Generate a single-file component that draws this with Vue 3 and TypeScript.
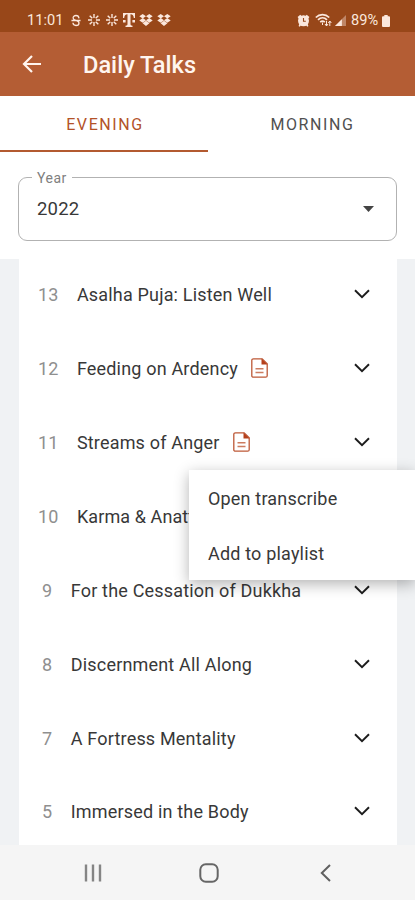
<script setup lang="ts">
interface Talk {
  day: number
  title: string
  transcript?: boolean
}

const talks: Talk[] = [
  { day: 13, title: 'Asalha Puja: Listen Well' },
  { day: 12, title: 'Feeding on Ardency', transcript: true },
  { day: 11, title: 'Streams of Anger', transcript: true },
  { day: 10, title: 'Karma & Anatta' },
  { day: 9, title: 'For the Cessation of Dukkha' },
  { day: 8, title: 'Discernment All Along' },
  { day: 7, title: 'A Fortress Mentality' },
  { day: 5, title: 'Immersed in the Body' },
]
</script>

<template>
  <div class="screen">
    <div class="status">
      <span class="clock">11:01</span>
      <svg class="s-badge" width="10" height="13" viewBox="0 0 11 14" fill="none" stroke="currentColor" stroke-width="1.4">
        <path d="M8.800 4.600C8.600 2.500 7.300 1.500 5.500 1.500 3.600 1.500 2.300 2.600 2.300 4.300 2.300 7.500 8.800 6.300 8.800 9.700 8.800 11.500 7.500 12.500 5.500 12.500 3.500 12.500 2.300 11.500 2.100 9.500M.5 7h10" />
      </svg>
      <svg v-for="n in 2" :key="'f' + n" class="flake" width="12" height="12" viewBox="0 0 12 12" fill="none" stroke="currentColor" stroke-width="1.400">
        <path d="M6 0v4M6 8v4M0 6h4M8 6h4M1.700 1.700l2.600 2.600M7.700 7.700l2.600 2.600M10.300 1.700 7.700 4.300M4.300 7.700l-2.600 2.600" />
      </svg>
      <svg class="carrier" width="12" height="14" viewBox="0 0 12 14" fill="currentColor">
        <path d="M0 0h12v5h-1.200C10.700 2.800 9.700 1.400 7.500 1.300V11c0 1.200.5 1.600 2 1.700V14h-7v-1.300c1.500-.1 2-.5 2-1.700V1.300C2.300 1.400 1.300 2.800 1.200 5H0zM0 7h2.600v2.600H0zM9.400 7H12v2.600H9.400z" />
      </svg>
      <svg v-for="n in 2" :key="'d' + n" class="box" width="14" height="12" viewBox="0 0 14 12" fill="currentColor">
        <path d="M3.700 0 7 2.200 3.700 4.400.3 2.200zM10.300 0l3.400 2.200-3.400 2.200L7 2.200zM3.700 4 7 6.200 3.700 8.700.3 6.600zM10.300 4l3.400 2.600-3.400 2.100L7 6.200zM7 6.800l3.400 2.500L7 12 3.600 9.300z" />
      </svg>
      <span class="grow"></span>
      <svg class="alarm" width="13" height="13" viewBox="0 0 13 13">
        <g fill="currentColor"><circle cx="6.500" cy="6.800" r="5.500" /><path d="M.6 3 3.300.8 5 2.500 2 5zM12.400 3 9.700.8 8 2.500 11 5zM2.500 9.500l1.700 1.500-1.500 1.700-1.100-.8zM10.500 9.500 8.800 11l1.500 1.700 1.100-.8z" /></g>
        <path d="M6.500 4v3.300h2.300" fill="none" stroke="#984719" stroke-width="1.100" />
      </svg>
      <svg class="wifi" width="17" height="14" viewBox="0 0 17 14" fill="none" stroke="currentColor" stroke-width="1.700">
        <path d="M.8 4.500C4.500.7 10.500.7 14.200 4.500M3 6.900c2.600-2.600 6.400-2.600 9 0M5.200 9.200c1.400-1.300 3.200-1.300 4.600 0" />
        <path d="M7.500 9.500v2.500M11.500 8v5M10 11l1.500 2 1.500-2M14.800 13V8M13.300 10l1.500-2 1.500 2" stroke-width="1" />
      </svg>
      <svg class="signal" width="11" height="11" viewBox="0 0 12 12" fill="currentColor">
        <path d="M12 0v12H0z" opacity=".4" /><path d="M7.500 4.500V12H0z" />
      </svg>
      <span class="percent">89%</span>
      <svg class="battery" width="8" height="12" viewBox="0 0 8 12" fill="currentColor">
        <path d="M2.300 0h3.400v1.300H7q1 0 1 1V11q0 1-1 1H1q-1 0-1-1V2.300q0-1 1-1h1.300z" />
      </svg>
    </div>

    <header class="appbar">
      <svg width="20" height="18" viewBox="0 0 20 18" fill="none" stroke="currentColor" stroke-width="2.200">
        <path d="M19 9H2.500M10 1 2 9l8 8" />
      </svg>
      <h1>Daily Talks</h1>
    </header>

    <nav class="tabs">
      <span class="tab active">EVENING</span>
      <span class="tab">MORNING</span>
    </nav>

    <div class="filter">
      <fieldset class="select">
        <legend>Year</legend>
        <span>2022</span>
        <svg width="11" height="6" viewBox="0 0 11 6" fill="#444"><path d="M0 0h11L5.500 6z" /></svg>
      </fieldset>
    </div>

    <main class="body">
      <div class="list">
        <div v-for="talk in talks" :key="talk.day" class="row">
          <span class="day" :class="{ single: talk.day < 10 }">{{ talk.day }}</span>
          <span class="title">{{ talk.title }}</span>
          <svg v-if="talk.transcript" class="doc" width="17" height="20" viewBox="0 0 17 20">
            <path d="M2.500.8h8.700l5 5v11.900q0 1.500-1.500 1.500H2.500Q.8 19.200.8 17.700V2.300Q.8.8 2.500.8z" fill="none" stroke="#bd5836" stroke-width="1.300" />
            <path d="M10.500.5v6h6z" fill="#b5401c" />
            <path d="M4.500 10.700h8M4.500 14.500h8" stroke="#cc7c60" stroke-width="1.500" />
          </svg>
          <svg class="chevron" width="16" height="10" viewBox="0 0 16 10" fill="none" stroke="#1c1c1c" stroke-width="1.900">
            <path d="m1 1.300 7 6.900 7-6.900" />
          </svg>
        </div>
      </div>
      <div class="menu">
        <div class="item">Open transcribe</div>
        <div class="item">Add to playlist</div>
      </div>
    </main>

    <footer class="sysnav">
      <svg width="18" height="18" viewBox="0 0 18 18" stroke="#858585" stroke-width="2.400"><path d="M2 .5v17M9 .5v17M16 .5v17" /></svg>
      <svg class="home" width="20" height="20" viewBox="0 0 20 20" fill="none" stroke="#666" stroke-width="2"><rect x="1.300" y="1.300" width="17.400" height="17.400" rx="5.500" /></svg>
      <svg width="11" height="18" viewBox="0 0 11 18" fill="none" stroke="#606060" stroke-width="2"><path d="M10 1 1.800 9l8.200 8" /></svg>
    </footer>
  </div>
</template>

<style>
body {
  margin: 0;
}
</style>

<style scoped>
.screen {
  width: 415px;
  height: 900px;
  display: flex;
  flex-direction: column;
  overflow: hidden;
  background: #fff;
  color: #383838;
  font-family: Roboto, "Liberation Sans", sans-serif;
}
svg {
  flex: none;
  display: block;
}
.status {
  flex: none;
  height: 32px;
  box-sizing: border-box;
  padding: 8px 25px 0 27px;
  display: flex;
  align-items: center;
  background: #984719;
  color: #fbe7dc;
}
.clock,
.percent {
  font-size: 14.600px;
  line-height: 22px;
}
.clock { width: 36px; }
.s-badge { margin-left: 8px; }
.flake { margin-left: 7px; }
.flake + .flake { margin-left: 6px; }
.carrier { margin-left: 5px; }
.box { margin-left: 4px; }
.grow { flex: 1; }
.wifi { margin-left: 5px; }
.signal { margin-left: 3px; }
.percent { margin-left: 5px; width: 29px; }
.battery { margin-left: 2px; margin-top: 1px; }
.appbar {
  flex: none;
  height: 64px;
  box-sizing: border-box;
  padding-left: 22px;
  display: flex;
  align-items: center;
  gap: 41px;
  background: #b45d34;
  color: #fff5ef;
}
h1 {
  margin: 0;
  padding-top: 2px;
  font-size: 23.600px;
  font-weight: 500;
  line-height: 30px;
}
.tabs {
  flex: none;
  height: 56px;
  display: grid;
  grid-template-columns: 208px 207px;
}
.tab {
  display: flex;
  align-items: center;
  justify-content: center;
  box-sizing: border-box;
  padding: 2px 0 0 2px;
  border-bottom: 2px solid transparent;
  font-size: 16px;
  letter-spacing: 1.600px;
  color: #505050;
}
.tab.active {
  color: #b35228;
  border-color: #b35a30;
}
.filter {
  flex: none;
  height: 107px;
  box-sizing: border-box;
  padding: 17px 18px 18px;
}
.select {
  height: 72px;
  box-sizing: border-box;
  margin: 0;
  padding: 0 22px 8px 18px;
  border: 1px solid #b2b2b2;
  border-radius: 9px;
  display: flex;
  align-items: center;
  justify-content: space-between;
  font-size: 18.500px;
  letter-spacing: 0.200px;
}
legend {
  margin-left: -5px;
  padding: 1px 5px 0;
  font-size: 14px;
  line-height: 16px;
  letter-spacing: 0.500px;
  color: #808080;
}
.body {
  flex: 1;
  min-height: 0;
  position: relative;
  background: #f0f2f4;
  padding: 0 18px 0 19px;
}
.list {
  height: 100%;
  overflow: hidden;
  background: #fff;
}
.row {
  height: 73.860px;
  display: flex;
  align-items: center;
  padding: 0 27px 2px 19px;
  font-size: 18px;
  letter-spacing: 0.180px;
  box-sizing: border-box;
}
.day {
  margin-right: 18.300px;
  color: #8f8f8f;
}
.day.single {
  padding-left: 4px;
  margin-right: 18.500px;
}
.title {
  white-space: nowrap;
}
.row:nth-child(4) .title {
  letter-spacing: 0.100px;
}
.doc {
  margin: 0 0 1px 13px;
}
.chevron {
  margin: 0 0 1px auto;
}
.menu {
  position: absolute;
  top: 211px;
  left: 189px;
  right: 0;
  height: 110px;
  background: #fff;
  box-shadow: 0 4px 14px rgba(0, 0, 0, 0.300);
}
.item {
  height: 55px;
  box-sizing: border-box;
  display: flex;
  align-items: center;
  padding: 1px 0 0 19px;
  font-size: 18px;
  letter-spacing: 0.180px;
}
.sysnav {
  flex: none;
  height: 55px;
  box-sizing: border-box;
  padding: 1px 84px 0 84px;
  display: flex;
  align-items: center;
  justify-content: space-between;
  background: #f5f5f5;
}
.home {
  margin-right: 4px;
}
</style>
